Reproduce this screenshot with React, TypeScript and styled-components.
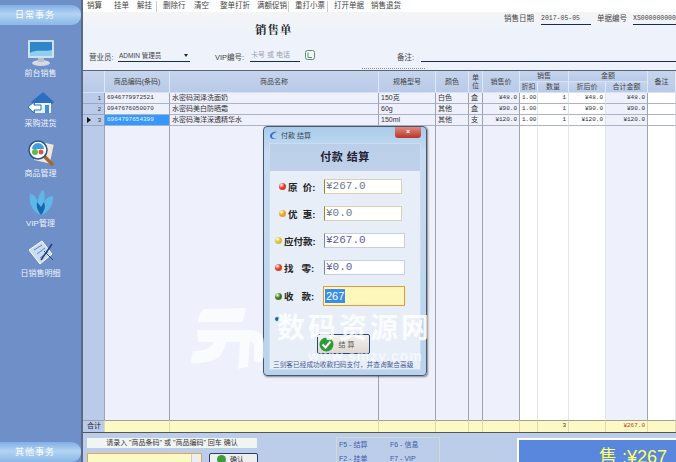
import React from "react";
import styled, { createGlobalStyle } from "styled-components";

const cjk = `"Liberation Sans","Noto Sans CJK SC",sans-serif`;

const Global = createGlobalStyle`
  html, body { margin: 0; padding: 0; width: 676px; height: 462px; overflow: hidden; background: #c0d0ea; }
  * { box-sizing: border-box; }
  #root { width: 676px; height: 462px; position: relative; overflow: hidden; font-family: ${cjk}; }
`;

const Page = styled.div`
  width: 676px; height: 462px; display: flex; position: relative; overflow: hidden;
`;
const Sidebar = styled.aside`
  width: 83px; height: 462px; flex: none; display: flex; flex-direction: column;
  background: #6f8fc8; border-right: 2px solid #5a6a86; padding-top: 5px;
`;
const SideTitle = styled.div`
  height: 20px; width: 81px; flex: none; border-radius: 0 9px 9px 0;
  background: linear-gradient(#7fb0e6 0%, #b3d3f2 45%, #8ab8e8 100%);
  color: #fff; font-size: 9px; line-height: 20px; padding-left: 15px; letter-spacing: 1px;
`;
const SideList = styled.div`
  flex: 1; display: flex; flex-direction: column; align-items: center; padding-top: 14px; gap: 10px;
`;
const SideItem = styled.div`
  width: 81px; height: 40px; display: flex; flex-direction: column; align-items: center;
  color: #eef3fb; font-size: 8px; line-height: 10px; gap: 3px;
  svg { width: 28px; height: 27px; flex: none; }
`;
const Main = styled.main`
  flex: 1; min-width: 0; height: 462px; display: flex; flex-direction: column;
`;
const Toolbar = styled.nav`
  height: 12px; flex: none; display: flex; align-items: center; padding-left: 4px; font-size: 7.5px; color: #444;
  background: #fff;
`;
const ToolItem = styled.span<{ $w: number; $sep?: boolean }>`
  width: ${p => p.$w}px; flex: none; white-space: nowrap; height: 11px; line-height: 10px;
  border-right: ${p => (p.$sep ? "1px solid #c9ced6" : "none")};
  margin-right: ${p => (p.$sep ? 6 : 0)}px;
`;
const FormArea = styled.section`
  height: 59px; flex: none; background: linear-gradient(#f4f5f5, #eef3fb 30%, #edf2fb);
  border-bottom: 1px solid #5b6470; position: relative; color: #444; font-size: 7.5px;
`;
const Splitter = styled.i`
  position: absolute; left: 279px; bottom: 1px; width: 63px; border-bottom: 1px dotted #7b8aa5;
`;
const TopRow = styled.div`
  height: 26px; display: flex; align-items: flex-start; padding: 0 0 0 172px; overflow: hidden;
`;
const DocTitle = styled.h1`
  margin: 9px 0 0; font: bold 11.5px "Liberation Serif","Noto Serif CJK SC","Noto Sans CJK SC",serif;
  width: 249px; flex: none; color: #222; letter-spacing: 1px;
`;
const Label = styled.span<{ $w: number }>`
  width: ${p => p.$w}px; flex: none; white-space: nowrap;
`;
const TopLabel = styled(Label)`
  margin-top: 1px; line-height: 11px;
`;
const Value = styled.span<{ $w: number }>`
  width: ${p => p.$w}px; flex: none; border-bottom: 1px solid #1c2a4c; height: 12px;
  white-space: nowrap; overflow: hidden; font: 6.5px/11px "Liberation Mono",monospace; color: #444;
`;
const TopValue = styled(Value)`
  margin: 1px 6px 0 0;
`;
const InfoRow = styled.div`
  height: 14px; margin-top: 10px; display: flex; align-items: flex-end; padding-left: 6px;
`;
const SelectBox = styled.span`
  width: 72px; flex: none; border-bottom: 1px solid #1c2a4c; height: 13px; display: flex; align-items: center;
  padding-left: 1px; font-size: 6.5px; margin-right: 25px; justify-content: space-between;
  i { display: block; width: 0; height: 0; border: 2px solid transparent; border-top: 3px solid #222; border-bottom: 0; margin-right: 2px; }
`;
const Phone = styled.span`
  width: 50px; flex: none; height: 13px; border-bottom: 1px solid #1c2a4c; color: #9aa0a8; font-size: 7px; line-height: 12px;
  padding-left: 1px; margin-right: 5px;
`;
const LookupIcon = styled.span`
  width: 10px; height: 10px; flex: none; margin: 0 82px 2px 0; display: block;
  svg { display: block; width: 10px; height: 10px; }
`;
const Remark = styled.span`
  flex: 1; border-bottom: 1px solid #1c2a4c; height: 13px;
`;

const Grid = styled.div`
  flex: 1; min-height: 0; display: grid; font-size: 7px; color: #333;
  grid-template-columns: 22px 65px 209px 57px 33px 14px 37px 18px 31px 37px 42px 28px;
  grid-template-rows: 11px 11px 11px 11px 11px 1fr 12px;
  border-bottom: 1px solid #555;
`;
const HeadCell = styled.div<{ $col: string; $row: string }>`
  grid-column: ${p => p.$col}; grid-row: ${p => p.$row};
  background: linear-gradient(#c6d5ee, #b8cae8); border-right: 1px solid #e0e8f5; border-bottom: 1px solid #d9e2f2;
  display: flex; align-items: center; justify-content: center; text-align: center; line-height: 8px; white-space: nowrap;
  overflow: hidden; color: #444;
`;
const RowHead = styled.div<{ $active?: boolean }>`
  background: #b9cbe8; border-bottom: 1px solid #9aa8c0; border-right: 1px solid #8e98ac;
  display: flex; align-items: center; justify-content: space-between; padding: 0 3px 0 4px; font-size: 6px; color: #333;
  i { width: 0; height: 0; border: 3px solid transparent; border-left: 4px solid #111; border-right: 0; visibility: ${p => (p.$active ? "visible" : "hidden")}; }
`;
const Cell = styled.div<{ $white?: boolean; $right?: boolean; $sel?: boolean; $mono?: boolean }>`
  background: ${p => (p.$sel ? "#3399ff" : p.$white ? "#fff" : "#eef0fb")};
  color: ${p => (p.$sel ? "#e8f4ff" : "#333")};
  border-right: 1px solid ${p => (p.$white ? "#dfe2e8" : "#9da3b3")}; border-bottom: 1px solid #aab2c4;
  text-align: ${p => (p.$right ? "right" : "left")}; padding: 0 2px; line-height: 10px; overflow: hidden; white-space: nowrap;
  font-family: ${p => (p.$mono ? `"Liberation Mono",monospace` : "inherit")};
  font-size: ${p => (p.$mono ? "6px" : "7px")};
`;
const Filler = styled.div<{ $white?: boolean; $head?: boolean }>`
  background: ${p => (p.$head ? "#b9cbe8" : p.$white ? "#fff" : "#eef0fb")};
  border-right: 1px solid ${p => (p.$white ? "#e3e5ea" : "#9da3b3")};
`;
const Total = styled.div<{ $red?: boolean }>`
  background: #fdf9c4; border-top: 1px solid #9da39a; border-right: 1px solid #dedcae;
  color: ${p => (p.$red ? "#c0392b" : "#333")}; font: 6px/10px "Liberation Mono",monospace; text-align: right; padding-right: 2px; white-space: nowrap;
`;
const TotalHead = styled(Total)`
  background: #b9cbe8; font: 7px/10px ${cjk}; color: #222; text-align: left; padding-left: 4px;
`;

const Footer = styled.footer`
  height: 29px; flex: none; display: flex; background: #bccde9; padding: 5px 0 0 4px; overflow: hidden;
`;
const EntryCol = styled.div`
  width: 249px; flex: none; display: flex; flex-direction: column; gap: 5px;
`;
const Hint = styled.div`
  width: 170px; height: 10px; background: #f0f5f2; font-size: 7px; line-height: 10px; text-align: center; color: #333; white-space: nowrap;
`;
const EntryRow = styled.div`
  display: flex; gap: 7px; height: 14px; overflow: hidden;
`;
const EntryInput = styled.div`
  width: 115px; height: 24px; background: #fdf9c4; border: 1px solid #e3a650; position: relative;
  &::after { content: ""; position: absolute; right: 0; top: 0; width: 9px; height: 24px; background: #eee; border-left: 1px solid #ccc; }
`;
const EntryBtn = styled.div`
  width: 49px; height: 24px; background: #eef0ee; border: 1px solid #25406c; border-radius: 2px; display: flex; gap: 4px; padding: 1px 0 0 7px; font-size: 7px; line-height: 9px; color: #333;
  i { width: 9px; height: 9px; border-radius: 50%; background: #3e9b3e; display: block; }
`;
const Keys = styled.div`
  width: 104px; height: 30px; flex: none; margin-top: -1px; border: 1px solid #d0ddc8; border-width: 1px 1px 0 1px; padding: 0 0 0 2px; display: grid;
  grid-template-columns: 51px 50px; grid-auto-rows: 14px; color: #3c5aa8; font-size: 7px; line-height: 13px; white-space: nowrap;
`;
const Big = styled.div`
  margin: 0 0 0 77px; flex: 1; height: 30px; background: #5a87de; border: 2px solid #fff; border-right: 0; border-bottom: 0;
  color: #ffff66; font-size: 18px; line-height: 34px; padding-left: 80px; white-space: nowrap; overflow: hidden;
`;

const Dialog = styled.div`
  position: absolute; left: 263px; top: 126px; width: 164px; height: 250px; border-radius: 4px; z-index: 2;
  background: linear-gradient(#a9cbea, #c5dcf3 10%, #b9d3ee); border: 1px solid #48576e; padding: 0 5px 5px;
  box-shadow: 1px 1px 2px rgba(0,0,0,.45); display: flex; flex-direction: column;
`;
const DlgTitle = styled.div`
  height: 16px; flex: none; display: flex; align-items: center; gap: 3px; font-size: 7px; color: #345;
  position: relative;
  svg { width: 9px; height: 9px; }
`;
const Close = styled.span`
  position: absolute; right: 0; top: 0; width: 26px; height: 11px; background: linear-gradient(#e08a80, #b9342a);
  border-radius: 0 0 3px 3px; color: #fff; font-size: 7px; line-height: 10px; text-align: center; font-weight: bold;
`;
const DlgBody = styled.div`
  flex: 1; background: #e7eef8; display: flex; flex-direction: column; border: 1px solid #cfdcee; min-height: 0; position: relative;
`;
const DlgHead = styled.div`
  height: 27px; flex: none; background: linear-gradient(#bccfe9, #bfd1ea); text-align: center;
  font-size: 11px; font-weight: bold; line-height: 26px; color: #223; letter-spacing: .5px;
`;
const PayRows = styled.div`
  padding-top: 8px; display: flex; flex-direction: column; gap: 12px; flex: none;
`;
const PayRow = styled.div<{ $indent: number }>`
  height: 15px; display: flex; align-items: center; padding-left: ${p => p.$indent}px;
  font-size: 9.5px; font-weight: bold; color: #222; white-space: pre;
`;
const Dot = styled.i<{ $c: string }>`
  width: 7px; height: 7px; flex: none; border-radius: 50%; margin-right: 2px; display: block;
  background: radial-gradient(circle at 35% 30%, #fff 0, ${p => p.$c} 45%, ${p => p.$c} 100%);
`;
const Amount = styled.div<{ $w: number; $gold?: boolean }>`
  width: ${p => p.$w}px; height: 15px; flex: none; margin: 0 ${p => (p.$gold ? 18 : 15)}px 0 auto; background: #fff;
  border: 1px solid ${p => (p.$gold ? "#d8d3ae" : "#c6cfe2")}; border-left-color: ${p => (p.$gold ? "#8c8a30" : "#7787a8")};
  color: ${p => (p.$gold ? "#6d7a88" : "#5a5aa5")}; font: 11px/13px "Liberation Mono","Noto Sans CJK SC",monospace; padding-left: 1px;
`;
const CashRow = styled(PayRow)`
  height: 20px; margin-top: -1px;
`;
const Cash = styled.div`
  width: 82px; height: 20px; margin: 0 15px 0 auto; flex: none; background: #fdf7bd; border: 1px solid #e39a3c; padding: 2px 0 0 1px;
  font: 11px/14px "Liberation Sans",sans-serif;
  span { background: #3a8ee6; color: #fff; padding: 0 1px; display: inline-block; }
`;
const RadioRow = styled.div`
  height: 10px; margin-top: 8px; padding-left: 4px; display: flex; align-items: center;
`;
const Radio = styled.i`
  width: 6px; height: 6px; border-radius: 50%; background: #2d5ca6; border: 1px solid #cfe; display: block;
`;
const OkBtn = styled.div`
  align-self: center; width: 53px; height: 20px; margin: 10px 0 0 -4px; flex: none; border: 1px solid #274a7e; border-radius: 2px; background: linear-gradient(#f4f1ee, #dfd8d2);
  display: flex; align-items: center; padding-left: 1px; gap: 5px; font-size: 7px; color: #555; white-space: nowrap;
`;
const Note = styled.div`
  font-size: 6.7px; color: #3f5a90; margin-top: 6px; padding-left: 3px; white-space: nowrap; overflow: hidden; line-height: 9px;
`;
const Watermark = styled.div`
  position: absolute; left: 180px; top: 295px; width: 260px; height: 82px; z-index: 3; pointer-events: none;
  > svg { position: absolute; left: 0; top: 0; width: 100px; height: 80px; }
`;
const MarkText = styled.div`
  position: absolute; left: 97px; top: 12px; font: bold 28px/38px "Noto Sans CJK SC",sans-serif; letter-spacing: 3px; white-space: nowrap; color: rgba(255,255,255,.85);
`;
const MarkUrl = styled.div`
  position: absolute; left: 128px; top: 53px; font: bold 14px/16px "Liberation Sans",sans-serif; letter-spacing: 1px; color: rgba(255,255,255,.6);
`;

const Monitor = () => (
  <svg viewBox="0 0 28 27"><ellipse cx="14" cy="24" rx="9" ry="3" fill="#d5d9e2"/><rect x="11" y="18" width="6" height="5" fill="#b9c0cc"/><rect x="1" y="1" width="26" height="18" rx="1" fill="#cfe0ee"/><rect x="3" y="3" width="22" height="14" fill="#2f86c8"/><path d="M3 14c6-4 12-1 22-3v6H3z" fill="#8fd0ef"/></svg>
);
const House = () => (
  <svg viewBox="0 0 28 27"><path d="M4 13L16 3l11 10-2 2H6z" fill="#2c6fc0"/><path d="M8 14h16v10H8z" fill="#e8f3fb"/><rect x="18" y="16" width="4" height="8" fill="#3f8fd6"/><path d="M1 18l6-5v3h7v5H7v3z" fill="#fff" stroke="#2c6fc0"/></svg>
);
const Lens = () => (
  <svg viewBox="0 0 28 27"><rect x="9" y="4" width="16" height="19" fill="#f2e6d8" transform="rotate(12 17 13)"/><path d="M17 17l8 8" stroke="#a8662c" strokeWidth="3.5" strokeLinecap="round"/><circle cx="11" cy="11" r="9" fill="#fff" stroke="#24558c" strokeWidth="1.5"/><path d="M5 10a6 6 0 0 1 12 0z" fill="#3f9fdc"/><circle cx="8" cy="13" r="3" fill="#66b945"/><circle cx="14" cy="13" r="2.5" fill="#dd5544"/></svg>
);
const Wings = () => (
  <svg viewBox="0 0 28 27"><path d="M14 26C7 24 1 15 3 5c5 0 7 5 8 9 0-6 2-11 5-13 2 3 2 8 1 12 2-4 5-6 9-6 1 8-4 16-12 19z" fill="#5db8e8"/><path d="M14 26c-3-4-5-8-4-13l4 5 3-5c2 5 0 10-3 13z" fill="#1566ad"/></svg>
);
const Pad = () => (
  <svg viewBox="0 0 28 27"><path d="M2 11L15 2l10 13-12 10z" fill="#c9dcf2" stroke="#fff"/><path d="M7 11l8-5M10 15l8-6M13 19l8-6" stroke="#5b86bf"/><path d="M25 5L14 21" stroke="#1f3f6e" strokeWidth="1.5"/><path d="M17 12l9 9" stroke="#2c4f80"/></svg>
);
const Logo = () => (
  <svg viewBox="0 0 9 9"><path d="M8 1C4 0 1 3 1 5c0 3 4 4 7 2-3 1-5 0-5-2s2-3 5-4z" fill="#2d70c0"/></svg>
);
const Check = () => (
  <svg width="15" height="15" viewBox="0 0 15 15"><circle cx="7.5" cy="7.5" r="7" fill="#2f9a37"/><path d="M3.5 7.5l3 3 5-6" fill="none" stroke="#fff" strokeWidth="2"/></svg>
);
const Lookup = () => (
  <svg viewBox="0 0 10 10"><rect x=".5" y=".5" width="9" height="9" rx="2" fill="#f4f7f1" stroke="#5f8a7a"/><path d="M3 2.5v5h4" fill="none" stroke="#5f8a7a"/></svg>
);
const WaterLogo = () => (
  <svg viewBox="0 0 100 80">
    <path d="M24 14L66 13L63 27L18 27Q18 18 24 14Z" fill="rgba(255,255,255,.7)" />
    <path d="M17 35L72 35Q84 36 84 48L84 62L81 68L74 66L74 52Q74 46 70 47L68 72L58 74L60 47L46 47Q44 58 38 63Q28 69 10 68L13 56Q30 56 34 47L18 47Z" fill="rgba(255,255,255,.7)" />
  </svg>
);

const tools: [string, number, boolean?][] = [
  ["销算", 27], ["挂单", 23], ["解挂", 20, true], ["删除行", 31], ["清空", 26], ["整单打折", 37], ["满额促销", 32, true], ["重打小票", 33, true], ["打开单据", 37], ["销售退货", 40],
];
const rows = [
  ["6946779972521", "水密码润泽洗面奶", "150克", "白色", "盒", "¥48.0", "1.00", "1", "¥48.0", "¥48.0"],
  ["0947676050070", "水密码美白防晒霜", "60g", "其他", "盒", "¥90.0", "1.00", "1", "¥90.0", "¥90.0"],
  ["6964797654399", "水密码海洋深透精华水", "150ml", "其他", "支", "¥120.0", "1.00", "1", "¥120.0", "¥120.0"],
];
const sides: [React.ReactNode, string][] = [
  [<Monitor />, "前台销售"], [<House />, "采购进货"], [<Lens />, "商品管理"], [<Wings />, "VIP管理"], [<Pad />, "日销售明细"],
];
const whiteCols = [7, 8, 9, 11];

export default function App() {
  return (
    <Page>
      <Global />
      <Sidebar>
        <SideTitle>日常事务</SideTitle>
        <SideList>
          {sides.map(([icon, label]) => <SideItem key={label}>{icon}<span>{label}</span></SideItem>)}
        </SideList>
        <SideTitle>其他事务</SideTitle>
      </Sidebar>
      <Main>
        <Toolbar>
          {tools.map(([t, w, sep]) => <ToolItem key={t} $w={w} $sep={sep}>{t}</ToolItem>)}
        </Toolbar>
        <FormArea>
          <TopRow>
            <DocTitle>销售单</DocTitle>
            <TopLabel $w={37}>销售日期</TopLabel>
            <TopValue $w={50}>2017-05-05</TopValue>
            <TopLabel $w={36}>单据编号</TopLabel>
            <TopValue $w={43}>XS000000000</TopValue>
          </TopRow>
          <InfoRow>
            <Label $w={29}>营业员:</Label>
            <SelectBox>ADMIN 管理员<i /></SelectBox>
            <Label $w={35}>VIP编号:</Label>
            <Phone>卡号 或 电话</Phone>
            <LookupIcon><Lookup /></LookupIcon>
            <Label $w={24}>备注:</Label>
            <Remark />
          </InfoRow>
          <Splitter />
        </FormArea>
        <Grid>
          <HeadCell $col="1" $row="1 / 3" />
          <HeadCell $col="2" $row="1 / 3">商品编码(条码)</HeadCell>
          <HeadCell $col="3" $row="1 / 3">商品名称</HeadCell>
          <HeadCell $col="4" $row="1 / 3">规格型号</HeadCell>
          <HeadCell $col="5" $row="1 / 3">颜色</HeadCell>
          <HeadCell $col="6" $row="1 / 3">单<br />位</HeadCell>
          <HeadCell $col="7" $row="1 / 3">销售价</HeadCell>
          <HeadCell $col="8 / 10" $row="1">销售</HeadCell>
          <HeadCell $col="10 / 12" $row="1">金额</HeadCell>
          <HeadCell $col="8" $row="2">折扣</HeadCell>
          <HeadCell $col="9" $row="2">数量</HeadCell>
          <HeadCell $col="10" $row="2">折后价</HeadCell>
          <HeadCell $col="11" $row="2">合计金额</HeadCell>
          <HeadCell $col="12" $row="1 / 3">备注</HeadCell>
          {rows.map((r, i) => (
            <React.Fragment key={r[0]}>
              <RowHead $active={i === 2}><i />{i + 1}</RowHead>
              <Cell $mono $sel={i === 2}>{r[0]}</Cell>
              <Cell>{r[1]}</Cell>
              <Cell>{r[2]}</Cell>
              <Cell>{r[3]}</Cell>
              <Cell>{r[4]}</Cell>
              <Cell $mono $right>{r[5]}</Cell>
              <Cell $mono $white>{r[6]}</Cell>
              <Cell $mono $white $right>{r[7]}</Cell>
              <Cell $mono $white $right>{r[8]}</Cell>
              <Cell $mono $right>{r[9]}</Cell>
              <Cell $white />
            </React.Fragment>
          ))}
          {Array.from({ length: 12 }, (_, i) => <Filler key={i} $head={i === 0} $white={whiteCols.includes(i)} />)}
          <TotalHead>合计</TotalHead>
          {Array.from({ length: 11 }, (_, i) => (
            <Total key={i} $red={i === 9}>{i === 7 ? "3" : i === 9 ? "¥267.0" : ""}</Total>
          ))}
        </Grid>
        <Footer>
          <EntryCol>
            <Hint>请录入 "商品条码" 或 "商品编码" 回车 确认</Hint>
            <EntryRow>
              <EntryInput />
              <EntryBtn><i />确认</EntryBtn>
            </EntryRow>
          </EntryCol>
          <Keys>
            <span>F5 - 结算</span><span>F6 - 信息</span>
            <span>F2 - 挂单</span><span>F7 - VIP</span>
          </Keys>
          <Big>售 :¥267</Big>
        </Footer>
      </Main>

      <Dialog>
        <DlgTitle><Logo />付款 结算<Close>×</Close></DlgTitle>
        <DlgBody>
          <DlgHead>付款 结算</DlgHead>
          <PayRows>
            <PayRow $indent={9}><Dot $c="#e8352a" />原  价:<Amount $w={78} $gold>¥267.0</Amount></PayRow>
            <PayRow $indent={9}><Dot $c="#f0a020" />优  惠:<Amount $w={78} $gold>¥0.0</Amount></PayRow>
            <PayRow $indent={5}><Dot $c="#d8c030" />应付款:<Amount $w={81}>¥267.0</Amount></PayRow>
            <PayRow $indent={5}><Dot $c="#e03a20" />找   零:<Amount $w={81}>¥0.0</Amount></PayRow>
            <CashRow $indent={5}><Dot $c="#3f7a18" />收   款:<Cash><span>267</span></Cash></CashRow>
          </PayRows>
          <RadioRow><Radio /></RadioRow>
          <OkBtn><Check />结 算</OkBtn>
          <Note>三剑客已经成功收款扫码支付，并查询聚合高级</Note>
        </DlgBody>
      </Dialog>
      <Watermark>
        <WaterLogo />
        <MarkText>数码资源网</MarkText>
        <MarkUrl>www.smzy.com</MarkUrl>
      </Watermark>
    </Page>
  );
}
